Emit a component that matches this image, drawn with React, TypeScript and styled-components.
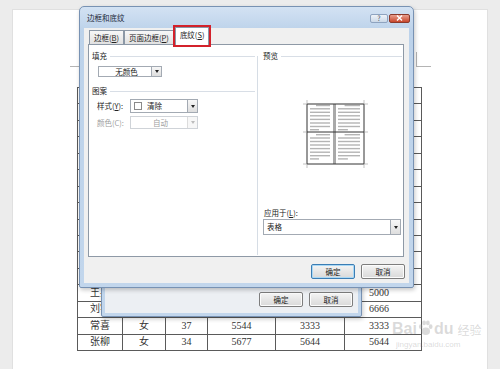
import styled, { createGlobalStyle } from 'styled-components'

const GlobalStyle = createGlobalStyle`
  html, body { margin: 0; padding: 0; }
  body { width: 500px; height: 369px; overflow: hidden; background: #ececec; }
  * { box-sizing: border-box; }
`

const Desktop = styled.div`
  position: relative;
  width: 500px;
  height: 369px;
  overflow: hidden;
  background: #ececec;
  padding: 9px 0 0 12px;
  font-family: 'Noto Sans CJK SC', sans-serif;
`

const Sheet = styled.div`
  position: relative;
  width: 476px;
  height: 372px;
  background: #fff;
  border: 1px solid #e0e0e0;
  padding: 77px 0 0 64px;
`

const CropMark = styled.div<{ $side: 'left' | 'right' }>`
  position: absolute;
  top: ${p => (p.$side === 'left' ? 56 : 42)}px;
  left: ${p => (p.$side === 'left' ? 57 : 403)}px;
  width: ${p => (p.$side === 'left' ? 9 : 15)}px;
  height: ${p => (p.$side === 'left' ? 1 : 15)}px;
  border-bottom: 1px solid #b4b4b4;
  border-left: ${p => (p.$side === 'right' ? '1px solid #b4b4b4' : 'none')};
`

const DocTable = styled.table`
  border-collapse: collapse;
  table-layout: fixed;
  width: 345px;
  font-family: 'Liberation Serif', 'Noto Sans CJK SC', serif;
  font-size: 10px;
  color: #333;

  tr {
    height: 16.45px;
  }

  td {
    border: 1px solid #5a5a5a;
    padding: 0;
    text-align: center;
    line-height: 1;
    overflow: hidden;
  }

  td:last-child {
    padding-right: 8px;
  }
`

const Window = styled.div<{ $x: number; $y: number; $w: number; $h: number; $pad: number }>`
  position: absolute;
  left: ${p => p.$x}px;
  top: ${p => p.$y}px;
  width: ${p => p.$w}px;
  height: ${p => p.$h}px;
  display: flex;
  flex-direction: column;
  background: linear-gradient(#d3e2f3, #bcd2ea 24px, #c2d6ec);
  border: 1px solid #7892b3;
  border-radius: 5px 5px 2px 2px;
  padding: 0 ${p => p.$pad}px ${p => p.$pad}px;
  box-shadow: 1px 2px 4px rgba(0, 0, 0, 0.22);
`

const TitleBar = styled.div`
  height: 21px;
  display: flex;
  align-items: center;
  justify-content: space-between;
  padding-left: 3px;
  margin-right: -1px;
`

const Title = styled.span`
  font-size: 7.5px;
  color: #1c2838;
`

const Caption = styled.div`
  display: flex;
  gap: 1px;
  margin-top: 1px;
`

const CaptionButton = styled.div<{ $close?: boolean }>`
  width: ${p => (p.$close ? 21 : 18)}px;
  height: 9px;
  display: flex;
  align-items: center;
  justify-content: center;
  border: 1px solid ${p => (p.$close ? '#8a3a2c' : '#8ea3bf')};
  border-radius: 2px;
  background: ${p =>
    p.$close ? 'linear-gradient(#e9a08f, #c8462c)' : 'linear-gradient(#eef3f9, #cbd8e7)'};
  font-size: 7px;
  line-height: 1;
  color: #4a5566;
`

const WindowBody = styled.div<{ $back?: boolean }>`
  flex: 1;
  display: flex;
  flex-direction: column;
  justify-content: ${p => (p.$back ? 'flex-end' : 'flex-start')};
  background: ${p => (p.$back ? '#eceff3' : '#f0f0f0')};
  padding: ${p => (p.$back ? '0 5px 6px 0' : '0 5px 0 4px')};
`

const TabRow = styled.div`
  height: 16px;
  display: flex;
  align-items: flex-end;
  padding-left: 1px;
`

const Tab = styled.div<{ $active?: boolean }>`
  position: relative;
  z-index: ${p => (p.$active ? 2 : 1)};
  height: ${p => (p.$active ? 18 : 15)}px;
  margin-bottom: -1px;
  margin-left: ${p => (p.$active ? 1 : 0)}px;
  padding: 0 4px;
  border: 1px solid #8c98a6;
  border-bottom: ${p => (p.$active ? 'none' : '1px solid #8c98a6')};
  background: ${p => (p.$active ? '#fff' : 'linear-gradient(#f7f7f7, #e1e1e1)')};
  outline: ${p => (p.$active ? '2px solid #d3212b' : 'none')};
  font-size: 7.5px;
  line-height: 13px;
  color: #222;
  white-space: nowrap;
`

const Panel = styled.div`
  height: 213px;
  display: flex;
  background: #fff;
  border: 1px solid #8e99a6;
`

const LeftColumn = styled.div`
  width: 168px;
  display: flex;
  flex-direction: column;
  padding: 6px 2px 0 3px;
`

const RightColumn = styled.div`
  flex: 1;
  display: flex;
  flex-direction: column;
  margin: 11px 0 1px;
  padding: 0 1px 0 5px;
  border-left: 1px solid #d6dde5;
`

const GroupHeader = styled.div<{ $lift?: boolean }>`
  height: 10px;
  display: flex;
  align-items: center;
  gap: 3px;
  margin-top: ${p => (p.$lift ? -5 : 0)}px;
  font-size: 7.5px;
  line-height: 10px;
  color: #222;

  &::after {
    content: '';
    flex: 1;
    height: 1px;
    background: #d8dee6;
  }
`

const FieldRow = styled.div<{ $top: number }>`
  display: flex;
  align-items: center;
  margin-top: ${p => p.$top}px;
  padding-left: 5px;
`

const FieldLabel = styled.span<{ $muted?: boolean; $width?: number }>`
  width: ${p => (p.$width ? `${p.$width}px` : 'auto')};
  font-size: 7.5px;
  line-height: 10px;
  color: ${p => (p.$muted ? '#a0a0a0' : '#222')};
  white-space: nowrap;
`

const Combo = styled.div<{ $w: number; $h: number; $muted?: boolean }>`
  width: ${p => p.$w}px;
  height: ${p => p.$h}px;
  display: flex;
  align-items: stretch;
  border: 1px solid ${p => (p.$muted ? '#cfd3d8' : '#a3aab3')};
  background: #fff;
  font-size: 7.5px;
  color: ${p => (p.$muted ? '#a0a0a0' : '#222')};
`

const ComboValue = styled.div<{ $center?: boolean }>`
  flex: 1;
  display: flex;
  align-items: center;
  justify-content: ${p => (p.$center ? 'center' : 'flex-start')};
  gap: 5px;
  padding-left: 3px;
  line-height: 1;
`

const Swatch = styled.span`
  width: 8px;
  height: 8px;
  border: 1px solid #8a8a8a;
  background: #fff;
`

const ComboArrow = styled.div<{ $muted?: boolean }>`
  width: 10px;
  display: flex;
  align-items: center;
  justify-content: center;
  border-left: 1px solid ${p => (p.$muted ? '#dcdcdc' : '#a3aab3')};
  background: ${p => (p.$muted ? '#f7f7f7' : 'linear-gradient(#f7f7f7, #dedede)')};

  &::after {
    content: '';
    border-left: 2.5px solid transparent;
    border-right: 2.5px solid transparent;
    border-top: 3px solid ${p => (p.$muted ? '#bcbcbc' : '#222')};
  }
`

const PreviewArt = styled.svg`
  display: block;
  margin: 39px 0 0 40px;
`

const Footer = styled.div`
  height: 26px;
  display: flex;
  align-items: center;
  justify-content: flex-end;
  gap: 6px;
  padding-top: 2px;
  margin-right: -1px;
`

const BackFooter = styled.div`
  display: flex;
  justify-content: flex-end;
  gap: 6px;
`

const PushButton = styled.div<{ $primary?: boolean }>`
  width: 44px;
  height: 15px;
  display: flex;
  align-items: center;
  justify-content: center;
  border: 1px solid ${p => (p.$primary ? '#3b7db4' : '#7d7d7d')};
  border-radius: 2px;
  background: linear-gradient(#f5f5f5, #e6e6e6 50%, #d9d9d9);
  box-shadow: inset 0 0 0 1px ${p => (p.$primary ? '#a9d8f5' : '#fcfcfc')};
  font-size: 7.5px;
  color: #222;
`

const Watermark = styled.div`
  position: absolute;
  left: 392px;
  top: 320px;
  display: flex;
  flex-direction: column;
  color: rgba(150, 150, 150, 0.35);
  font-family: 'Liberation Sans', 'Noto Sans CJK SC', sans-serif;
  pointer-events: none;
`

const WatermarkLogo = styled.div`
  display: flex;
  align-items: flex-end;
  gap: 1px;
  font-size: 16px;
  font-weight: bold;
  line-height: 1;
`

const WatermarkSite = styled.div`
  font-size: 8px;
  margin-top: 3px;
  padding-left: 4px;
`

const rows = [
  ...Array.from({ length: 12 }, () => ['', '', '', '', '', '']),
  ['王兵', '男', '29', '4800', '3000', '5000'],
  ['刘宇', '男', '31', '5120', '4400', '6666'],
  ['常喜', '女', '37', '5544', '3333', '3333'],
  ['张柳', '女', '34', '5677', '5644', '5644'],
]

const colWidths = [45, 43, 42, 68, 69, 77]

function PreviewDiagram() {
  const ox = 4
  const oy = 4
  const upperLines = [1.5, 4.8, 8.3, 11.8, 15.4, 19, 22.5, 25.7]
  const lowerLines = upperLines.map(v => v + 29.2)
  const line = (x1: number, x2: number, y: number, key: string) => (
    <line key={key} x1={ox + x1} x2={ox + x2} y1={oy + y} y2={oy + y} stroke="#b4b4b4" strokeWidth={1.4} />
  )
  const quadrant = (ys: number[], x1: number, x2: number, tag: string) =>
    ys.map((y, i) => {
      if (i === 0) return line(x1 + (x2 - x1) * 0.3, x2, y, `${tag}${i}`)
      if (i === ys.length - 1) return line(x1, x1 + (x2 - x1) * 0.45, y, `${tag}${i}`)
      return line(x1, x2, y, `${tag}${i}`)
    })
  const corners: [number, number][] = [
    [0, 0], [57, 0], [0, 60], [57, 60],
  ]
  return (
    <PreviewArt width={65} height={68} viewBox="0 0 65 68">
      {quadrant(upperLines, 3, 23, 'a')}
      {quadrant(upperLines, 31, 53, 'b')}
      {quadrant(lowerLines, 3, 23, 'c')}
      {quadrant(lowerLines, 31, 53, 'd')}
      <rect x={ox + 26} y={oy} width={3} height={60} fill="#a9a9a9" />
      <rect x={ox} y={oy} width={57} height={60} fill="none" stroke="#333" strokeWidth={1} />
      <line x1={ox} x2={ox + 57} y1={oy + 28} y2={oy + 28} stroke="#333" strokeWidth={1} />
      {corners.map(([x, y], i) => (
        <g key={i} stroke="#999" strokeWidth={0.6}>
          <line x1={ox + x + (x ? 1 : -1)} x2={ox + x + (x ? 4 : -4)} y1={oy + y} y2={oy + y} />
          <line x1={ox + x} x2={ox + x} y1={oy + y + (y ? 1 : -1)} y2={oy + y + (y ? 4 : -4)} />
        </g>
      ))}
      <g stroke="#999" strokeWidth={0.6}>
        <line x1={0} x2={3} y1={oy + 28} y2={oy + 28} />
        <line x1={62} x2={65} y1={oy + 28} y2={oy + 28} />
      </g>
    </PreviewArt>
  )
}

export default function App() {
  return (
    <Desktop>
      <GlobalStyle />
      <Sheet>
        <CropMark $side="left" />
        <CropMark $side="right" />
        <DocTable>
          <colgroup>
            {colWidths.map((w, i) => (
              <col key={i} style={{ width: w }} />
            ))}
          </colgroup>
          <tbody>
            {rows.map((r, i) => (
              <tr key={i}>
                {r.map((c, j) => (
                  <td key={j}>{c}</td>
                ))}
              </tr>
            ))}
          </tbody>
        </DocTable>
      </Sheet>

      <Window $x={101} $y={120} $w={261} $h={197} $pad={3}>
        <TitleBar />
        <WindowBody $back>
          <BackFooter>
            <PushButton>确定</PushButton>
            <PushButton>取消</PushButton>
          </BackFooter>
        </WindowBody>
      </Window>

      <Window $x={79} $y={6} $w={335} $h={282} $pad={4}>
        <TitleBar>
          <Title>边框和底纹</Title>
          <Caption>
            <CaptionButton>?</CaptionButton>
            <CaptionButton $close>
              <svg width="7" height="6" viewBox="0 0 7 6">
                <path d="M1 0.5 L6 5.5 M6 0.5 L1 5.5" stroke="#fff" strokeWidth="1.4" />
              </svg>
            </CaptionButton>
          </Caption>
        </TitleBar>
        <WindowBody>
          <TabRow>
            <Tab>边框(<u>B</u>)</Tab>
            <Tab>页面边框(<u>P</u>)</Tab>
            <Tab $active>底纹(<u>S</u>)</Tab>
          </TabRow>
          <Panel>
            <LeftColumn>
              <GroupHeader>填充</GroupHeader>
              <FieldRow $top={5}>
                <Combo $w={64} $h={11} style={{ marginLeft: 1 }}>
                  <ComboValue $center>无颜色</ComboValue>
                  <ComboArrow />
                </Combo>
              </FieldRow>
              <GroupHeader style={{ marginTop: 9 }}>图案</GroupHeader>
              <FieldRow $top={3}>
                <FieldLabel $width={33}>样式(<u>Y</u>):</FieldLabel>
                <Combo $w={68} $h={14}>
                  <ComboValue>
                    <Swatch />
                    清除
                  </ComboValue>
                  <ComboArrow />
                </Combo>
              </FieldRow>
              <FieldRow $top={3}>
                <FieldLabel $width={33} $muted>颜色(C):</FieldLabel>
                <Combo $w={68} $h={13} $muted>
                  <ComboValue $center>自动</ComboValue>
                  <ComboArrow $muted />
                </Combo>
              </FieldRow>
            </LeftColumn>
            <RightColumn>
              <GroupHeader $lift>预览</GroupHeader>
              <PreviewDiagram />
              <FieldRow $top={40} style={{ paddingLeft: 1 }}>
                <FieldLabel>应用于(<u>L</u>):</FieldLabel>
              </FieldRow>
              <FieldRow $top={1} style={{ paddingLeft: 0 }}>
                <Combo $w={138} $h={16}>
                  <ComboValue>表格</ComboValue>
                  <ComboArrow />
                </Combo>
              </FieldRow>
            </RightColumn>
          </Panel>
          <Footer>
            <PushButton $primary>确定</PushButton>
            <PushButton>取消</PushButton>
          </Footer>
        </WindowBody>
      </Window>

      <Watermark>
        <WatermarkLogo>
          <span>Bai</span>
          <svg width="15" height="17" viewBox="0 0 16 18">
            <g fill="rgba(150,150,150,0.35)">
              <ellipse cx="3" cy="7" rx="2" ry="2.5" />
              <ellipse cx="6.5" cy="3" rx="2" ry="2.5" />
              <ellipse cx="10.5" cy="3" rx="2" ry="2.5" />
              <ellipse cx="13.5" cy="7" rx="2" ry="2.5" />
              <ellipse cx="8.3" cy="12" rx="4.5" ry="4" />
            </g>
          </svg>
          <span>du</span>
          <span style={{ fontSize: 12, fontWeight: 'normal', marginLeft: 3 }}>经验</span>
        </WatermarkLogo>
        <WatermarkSite>jingyan.baidu.com</WatermarkSite>
      </Watermark>
    </Desktop>
  )
}
